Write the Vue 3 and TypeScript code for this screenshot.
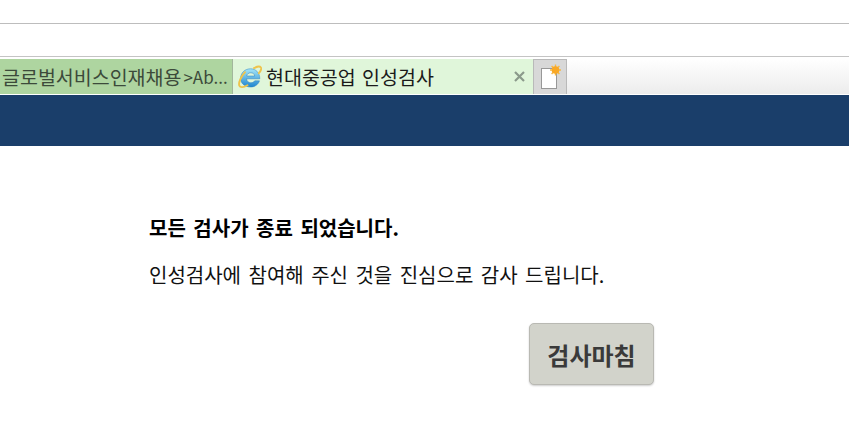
<script setup lang="ts">
const message = '인성검사에 참여해 주신 것을 진심으로 감사 드립니다.'
</script>

<template>
  <div class="page">
    <div class="chrome-top"></div>
    <div class="chrome-mid"></div>
    <div class="tabs">
      <div class="tab tab-green">
        <span class="tab-text">글로벌서비스인재채용</span>
        <span class="tab-latin">&gt;Ab...</span>
      </div>
      <div class="tab tab-active">
        <svg class="ie" viewBox="0 0 24 24" width="24" height="24">
          <defs>
            <linearGradient id="ieg" x1="0" y1="0" x2="0" y2="1">
              <stop offset="0" stop-color="#a6e6f8" />
              <stop offset="1" stop-color="#1f86d0" />
            </linearGradient>
          </defs>
          <path d="M2.6 13.5C2.6 8 6.8 3.8 12.4 3.8c5.6 0 9.4 4 9.4 10H8.6c.2 2.6 2 4 4.3 4 1.7 0 3-.7 3.8-2h4.8c-1.2 3.8-4.8 6.2-8.8 6.2-5.6 0-10.1-3.4-10.1-8.5zM8.7 11h8c-.3-2-1.8-3.2-3.9-3.2-2.2 0-3.7 1.2-4.1 3.2z" fill="url(#ieg)" stroke="#2a7fc0" stroke-width=".5" />
          <path d="M16 3.1c3.2-1.7 6-1.9 6.9-.6.8 1.1-.1 3.3-2 5.7M7 7.2C3 11.6.2 17.8 1.3 20.6c.9 2.2 4.3 1.9 8.1-.3" fill="none" stroke="#eec44c" stroke-width="1.9" stroke-linecap="round" />
        </svg>
        <span class="tab-title">현대중공업 인성검사</span>
        <svg class="close" viewBox="0 0 11 11" width="11" height="11">
          <path d="M1 1l9 9M10 1l-9 9" stroke="#8b9a8b" stroke-width="2.2" fill="none" />
        </svg>
      </div>
      <div class="tab tab-new">
        <svg viewBox="0 0 32 34" width="32" height="34">
          <rect x="7.5" y="8.5" width="15" height="20" fill="#fff" stroke="#989898" />
          <path d="M21.5 4.5v11M16 10h11M17.6 6.1l7.8 7.8M25.4 6.1l-7.8 7.8" stroke="#f9b83f" stroke-width="1.4" />
          <circle cx="21.5" cy="10" r="3.8" fill="#f9a825" />
        </svg>
      </div>
      <div class="tab-rest"></div>
    </div>
    <header class="banner"></header>
    <main class="content">
      <p class="title">모든 검사가 종료 되었습니다.</p>
      <p class="message">{{ message }}</p>
      <div class="actions">
        <button class="finish" type="button">검사마침</button>
      </div>
    </main>
  </div>
</template>

<style>
html, body { margin: 0; background: #fff; overflow: hidden; }
</style>

<style scoped>
.page {
  width: 849px;
  height: 423px;
  overflow: hidden;
  background: #fff;
  font-family: "Noto Sans CJK KR", "Noto Sans", sans-serif;
}
.chrome-top {
  height: 23px;
  border-bottom: 1px solid #bdbdbd;
}
.chrome-mid {
  height: 32px;
  border-bottom: 1px solid #c4c4c4;
}
.tabs {
  display: flex;
  height: 35px;
  margin-top: 2px;
  border-bottom: 1px solid #fff;
}
.tab { height: 35px; box-sizing: border-box; }
.tab-green {
  width: 233px;
  background: #aed5a0;
  border-right: 1px solid #a2b79c;
  padding-left: 2px;
  display: flex;
  align-items: center;
  gap: 2px;
  color: #3c4a3a;
  white-space: nowrap;
}
.tab-text {
  font-size: 19.5px;
}
.tab-latin {
  font-size: 17px;
}
.tab-active {
  width: 300px;
  background: #e0f6da;
  display: flex;
  align-items: center;
  padding-left: 5px;
}
.ie { flex: none; }
.tab-title {
  margin-left: 4px;
  font-size: 19.5px;
  color: #1a1a1a;
  white-space: nowrap;
  word-spacing: 2px;
}
.close {
  flex: none;
  margin-left: auto;
  margin-right: 8px;
}
.tab-new {
  width: 34px;
  background: #d8d8d8;
  border: 1px solid #b9b9b9;
  border-bottom: 0;
}
.tab-new svg { display: block; }
.tab-rest {
  flex: 1;
  background: linear-gradient(#ffffff, #ececec);
}
.banner {
  height: 51px;
  background: #1a3e6a;
}
.content {
  padding: 69px 0 0 149px;
  width: 505px;
}
.title {
  margin: 0;
  font-size: 20px;
  line-height: 26px;
  font-weight: 700;
  color: #000;
  white-space: nowrap;
  word-spacing: 3px;
}
.message {
  margin: 21px 0 0;
  font-size: 20px;
  line-height: 26px;
  color: #111;
  white-space: nowrap;
  word-spacing: 3px;
}
.actions {
  display: flex;
  justify-content: flex-end;
  margin-top: 35px;
}
.finish {
  width: 125px;
  height: 62px;
  background: #d2d3cb;
  border: 1px solid #b9b9b3;
  border-radius: 5px;
  box-shadow: 0 1px 2px rgba(0, 0, 0, 0.2);
  font-family: inherit;
  font-size: 24px;
  font-weight: 700;
  color: #3a3a3a;
  padding: 0;
}
</style>
